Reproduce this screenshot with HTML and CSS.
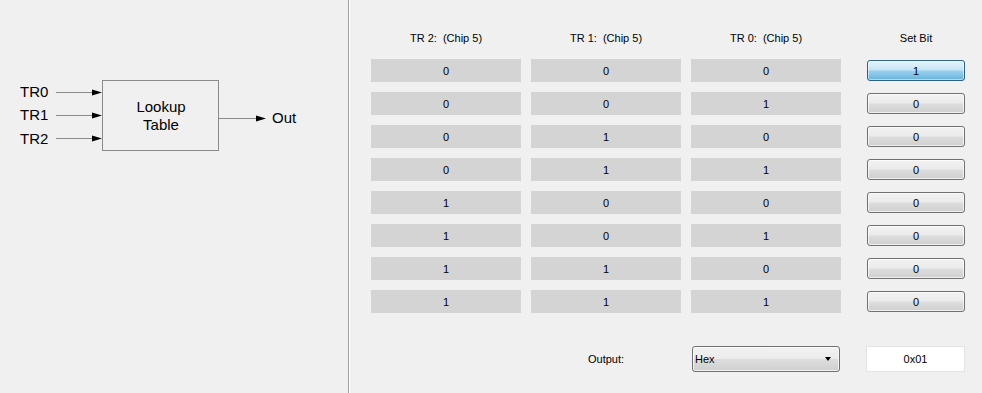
FILE: index.html
```html
<!DOCTYPE html>
<html>
<head>
<meta charset="utf-8">
<link rel="stylesheet" href="styles.css">
</head>
<body>
<div class="app">
  <div class="left">
    <svg class="diagram" width="348" height="393" viewBox="0 0 348 393">
      <g stroke="#8a8a8a" stroke-width="1" fill="none">
        <rect x="102.5" y="80.5" width="116" height="70"/>
        <line x1="56" y1="92.5" x2="93" y2="92.5"/>
        <line x1="56" y1="115.5" x2="93" y2="115.5"/>
        <line x1="56" y1="138.5" x2="93" y2="138.5"/>
        <line x1="219" y1="118.5" x2="257" y2="118.5"/>
      </g>
      <g fill="#000">
        <polygon points="92,89.5 102,92.5 92,95.5"/>
        <polygon points="92,112.5 102,115.5 92,118.5"/>
        <polygon points="92,135.5 102,138.5 92,141.5"/>
        <polygon points="256,115.5 266,118.5 256,121.5"/>
      </g>
      <g class="dtext">
        <text x="20" y="97">TR0</text>
        <text x="20" y="120">TR1</text>
        <text x="20" y="144">TR2</text>
        <text x="161" y="112" text-anchor="middle">Lookup</text>
        <text x="161" y="130" text-anchor="middle">Table</text>
        <text x="272" y="123">Out</text>
      </g>
    </svg>
  </div>
  <div class="divider"></div>
  <div class="right">
    <div class="table">
      <div class="hdr">TR 2:  (Chip 5)</div>
      <div class="hdr">TR 1:  (Chip 5)</div>
      <div class="hdr">TR 0:  (Chip 5)</div>
      <div class="hdr hdr-set">Set Bit</div>

      <div class="cell">0</div><div class="cell">0</div><div class="cell">0</div><div class="btn btn-on">1</div>
      <div class="cell">0</div><div class="cell">0</div><div class="cell">1</div><div class="btn">0</div>
      <div class="cell">0</div><div class="cell">1</div><div class="cell">0</div><div class="btn">0</div>
      <div class="cell">0</div><div class="cell">1</div><div class="cell">1</div><div class="btn">0</div>
      <div class="cell">1</div><div class="cell">0</div><div class="cell">0</div><div class="btn">0</div>
      <div class="cell">1</div><div class="cell">0</div><div class="cell">1</div><div class="btn">0</div>
      <div class="cell">1</div><div class="cell">1</div><div class="cell">0</div><div class="btn">0</div>
      <div class="cell">1</div><div class="cell">1</div><div class="cell">1</div><div class="btn">0</div>
    </div>
    <div class="output-row">
      <div class="out-label">Output:</div>
      <div class="select"><span>Hex</span><span class="caret"></span></div>
      <div class="out-box">0x01</div>
    </div>
  </div>
</div>
</body>
</html>
```

FILE: styles.css
```css
html, body {
  margin: 0;
  padding: 0;
  background: #f0f0f0;
}

body {
  font-family: "Liberation Sans", Arial, sans-serif;
  font-size: 11px;
  color: #000;
}

.app {
  display: flex;
  width: 982px;
  height: 393px;
  overflow: hidden;
}

.left {
  width: 348px;
  flex: none;
}

.diagram {
  display: block;
}

.dtext text {
  font-family: "Liberation Sans", Arial, sans-serif;
  font-size: 15px;
  fill: #000;
}

.divider {
  width: 1px;
  flex: none;
  background: #a0a0a0;
  border-right: 1px solid #ffffff;
}

.right {
  flex: 1;
  padding: 26px 0 0 21px;
}

.table,
.output-row {
  display: grid;
  grid-template-columns: 150px 150px 150px 114px;
  column-gap: 10px;
}

.table {
  row-gap: 10px;
  grid-auto-rows: 23px;
}

.hdr {
  display: flex;
  align-items: center;
  justify-content: center;
  white-space: pre;
}

.hdr-set {
  justify-self: end;
  width: 98px;
}

.cell {
  display: flex;
  align-items: center;
  justify-content: center;
  background: #d4d4d4;
}

.btn {
  justify-self: end;
  align-self: center;
  box-sizing: border-box;
  width: 98px;
  height: 21px;
  border: 1px solid #707070;
  border-radius: 3px;
  display: flex;
  align-items: center;
  justify-content: center;
  background: linear-gradient(to bottom, #f2f2f2 0%, #ebebeb 48%, #dddddd 52%, #cfcfcf 100%);
  box-shadow: inset 0 0 0 1px rgba(255, 255, 255, 0.7);
}

.btn-on {
  border-color: #2c628b;
  background: linear-gradient(to bottom, #e5f4fc 0%, #c4e5f6 48%, #98d1ef 52%, #68b3db 100%);
  box-shadow: inset 0 0 0 1px rgba(255, 255, 255, 0.5);
}

.output-row {
  margin-top: 33px;
  height: 26px;
}

.out-label {
  grid-column: 2;
  display: flex;
  align-items: center;
  justify-content: center;
}

.select {
  grid-column: 3;
  box-sizing: border-box;
  height: 26px;
  margin: 0 1px;
  border: 1px solid #707070;
  border-radius: 3px;
  display: flex;
  align-items: center;
  justify-content: space-between;
  padding: 0 8px 0 2px;
  font-size: 11px;
  background: linear-gradient(to bottom, #f2f2f2 0%, #ebebeb 48%, #dddddd 52%, #cfcfcf 100%);
  box-shadow: inset 0 0 0 1px rgba(255, 255, 255, 0.7);
}

.caret {
  width: 0;
  height: 0;
  border-left: 3.5px solid transparent;
  border-right: 3.5px solid transparent;
  border-top: 4px solid #000;
}

.out-box {
  grid-column: 4;
  justify-self: end;
  box-sizing: border-box;
  width: 99px;
  height: 26px;
  background: #fff;
  border: 1px solid #e3e3e3;
  display: flex;
  align-items: center;
  justify-content: center;
}
```
